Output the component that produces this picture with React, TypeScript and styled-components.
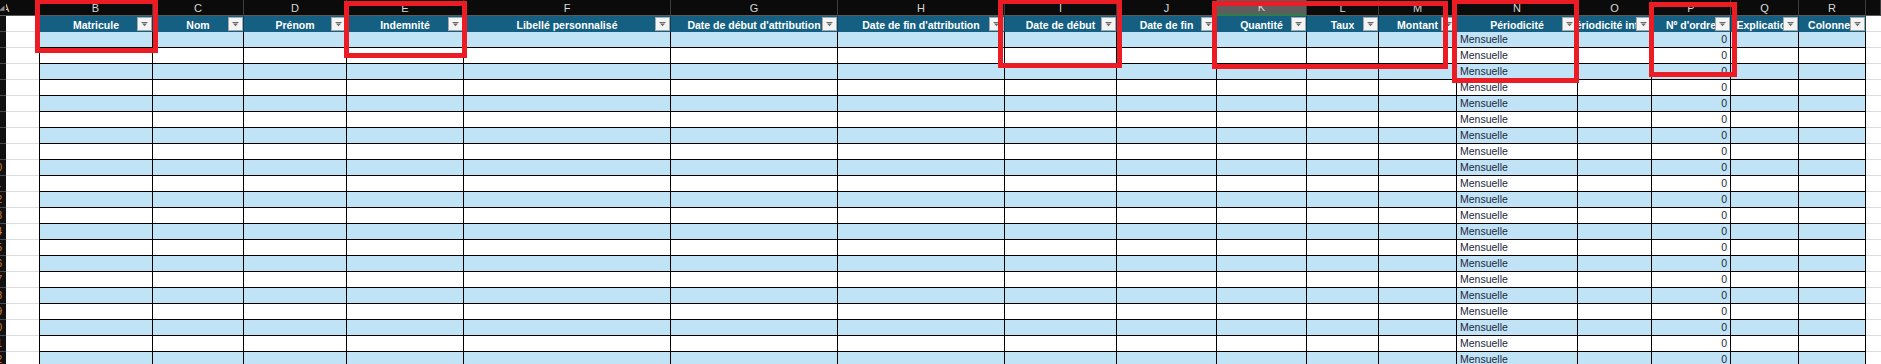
import React from 'react';
import styled, { createGlobalStyle, css } from 'styled-components';

// Excel-like table view: column letters, a filtered table header and banded rows.

const GlobalStyle = createGlobalStyle`
  html, body {
    margin: 0;
    padding: 0;
    background: #ffffff;
    overflow: hidden;
  }
  body {
    font-family: "Liberation Sans", Arial, sans-serif;
  }
`;

interface IColumn {
  letter: string;
  label: string;
  width: number;
  text?: string;
  number?: string;
}

const columns: IColumn[] = [
  { letter: 'B', label: 'Matricule', width: 114 },
  { letter: 'C', label: 'Nom', width: 91 },
  { letter: 'D', label: 'Prénom', width: 103 },
  { letter: 'E', label: 'Indemnité', width: 117 },
  { letter: 'F', label: 'Libellé personnalisé', width: 207 },
  { letter: 'G', label: "Date de début d'attribution", width: 167 },
  { letter: 'H', label: "Date de fin d'attribution", width: 167 },
  { letter: 'I', label: 'Date de début', width: 112 },
  { letter: 'J', label: 'Date de fin', width: 100 },
  { letter: 'K', label: 'Quantité', width: 90 },
  { letter: 'L', label: 'Taux', width: 72 },
  { letter: 'M', label: 'Montant', width: 78 },
  { letter: 'N', label: 'Périodicité', width: 121, text: 'Mensuelle' },
  { letter: 'O', label: 'Périodicité interne', width: 74 },
  { letter: 'P', label: "Nº d'ordre", width: 79, number: '0' },
  { letter: 'Q', label: 'Explication', width: 68 },
  { letter: 'R', label: 'Colonne1', width: 67 },
];

const ROW_COUNT = 21;

// annotation rectangles drawn over the sheet
const marks = [
  { x: 35, y: -1, w: 123, h: 54 },
  { x: 344, y: 1, w: 123, h: 57 },
  { x: 998, y: -1, w: 124, h: 69 },
  { x: 1212, y: 1, w: 236, h: 68 },
  { x: 1452, y: -1, w: 127, h: 84 },
  { x: 1649, y: 2, w: 88, h: 75 },
];

const template = `6px 33px ${columns.map((c) => `${c.width}px`).join(' ')} 1fr`;

const FilterIcon = () => (
  <svg width="7" height="5" viewBox="0 0 7 5">
    <rect x="0.5" y="0" width="6" height="1" fill="#6a6a6a" />
    <polygon points="1,1.5 6,1.5 3.5,4.2" fill="#6a6a6a" />
  </svg>
);

const App = () => {
  const rows = Array.from({ length: ROW_COUNT }, (_, i) => i);

  return (
    <>
      <GlobalStyle />
      <Sheet>
        <LetterRow>
          <Corner>
            <CornerMark>◢</CornerMark>
          </Corner>
          <Letter $clipLeft>A</Letter>
          {columns.map((c) => (
            <Letter key={c.letter} $selected={c.letter === 'K'}>
              {c.letter}
            </Letter>
          ))}
          <Letter />
        </LetterRow>

        <HeaderRow>
          <RowNumber />
          <BlankCell />
          {columns.map((c, i) => (
            <HeaderCell key={c.letter} $first={i === 0}>
              <HeaderLabel>{c.label}</HeaderLabel>
              <FilterButton>
                <FilterIcon />
              </FilterButton>
            </HeaderCell>
          ))}
          <BlankCell />
        </HeaderRow>

        {rows.map((r) => (
          <DataRow key={r}>
            <RowNumber>
              <RowDigits>{r + 2}</RowDigits>
            </RowNumber>
            <BlankCell />
            {columns.map((c, i) => (
              <DataCell
                key={c.letter}
                $band={r % 2 === 0}
                $first={i === 0}
                $align={c.number ? 'right' : 'left'}
              >
                {c.text || c.number || ''}
              </DataCell>
            ))}
            <BlankCell />
          </DataRow>
        ))}

        {marks.map((m, i) => (
          <Mark
            key={i}
            style={{ left: m.x, top: m.y, width: m.w, height: m.h }}
          />
        ))}
      </Sheet>
    </>
  );
};

export default App;

const Sheet = styled.div`
  position: relative;
  width: 1881px;
  height: 364px;
  overflow: hidden;
  background: #ffffff;
`;

const rowGrid = css`
  display: grid;
  grid-template-columns: ${template};
  height: 16px;
`;

const LetterRow = styled.div`
  ${rowGrid};
  background: #0b0b0b;
`;

const Corner = styled.div`
  position: relative;
  background: #0b0b0b;
  border-bottom: 1px solid #5a5a5a;
  overflow: hidden;
`;

const CornerMark = styled.span`
  display: block;
  color: #8a8a8a;
  font-size: 7px;
  line-height: 16px;
  margin-left: -1px;
`;

const Letter = styled.div<{ $selected?: boolean; $clipLeft?: boolean }>`
  display: flex;
  align-items: center;
  justify-content: ${({ $clipLeft }) => ($clipLeft ? 'flex-start' : 'center')};
  box-sizing: border-box;
  overflow: visible;
  font-family: "Liberation Sans", Arial, sans-serif;
  font-size: 11px;
  color: #d8d8d8;
  border-right: 1px solid #3c3c3c;
  border-bottom: 1px solid #5a5a5a;
  background: ${({ $selected }) => ($selected ? '#5e5e5e' : '#0b0b0b')};
  ${({ $selected }) =>
    $selected &&
    css`
      border-bottom: 2px solid #2f7d4a;
    `}
  ${({ $clipLeft }) =>
    $clipLeft &&
    css`
      margin-left: -4px;
      padding-left: 0;
    `}
`;

const HeaderRow = styled.div`
  ${rowGrid};
`;

const DataRow = styled.div`
  ${rowGrid};
`;

const RowNumber = styled.div`
  box-sizing: border-box;
  background: #111111;
  border-bottom: 1px solid #4a4a4a;
  overflow: hidden;
  white-space: nowrap;
`;

const RowDigits = styled.span`
  display: block;
  margin-left: -9px;
  font-size: 10px;
  line-height: 15px;
  color: #d9822b;
`;

const BlankCell = styled.div`
  box-sizing: border-box;
  background: #ffffff;
  border-bottom: 1px solid #dcdcdc;
`;

const HeaderCell = styled.div<{ $first?: boolean }>`
  position: relative;
  display: flex;
  align-items: center;
  justify-content: center;
  box-sizing: border-box;
  overflow: hidden;
  background: #156082;
  border-right: 1px solid #0c3f58;
  ${({ $first }) =>
    $first &&
    css`
      border-left: 1px solid #000000;
    `}
`;

const HeaderLabel = styled.span`
  flex: none;
  white-space: nowrap;
  font-family: "Liberation Sans", Arial, sans-serif;
  font-size: 10.5px;
  font-weight: 700;
  color: #ffffff;
  padding-top: 1px;
`;

const FilterButton = styled.span`
  position: absolute;
  top: 1px;
  right: 0;
  width: 15px;
  height: 14px;
  box-sizing: border-box;
  display: flex;
  align-items: center;
  justify-content: center;
  background: #f4f4f4;
  border: 1px solid #a8a8a8;
`;

const DataCell = styled.div<{
  $band: boolean;
  $first?: boolean;
  $align: 'left' | 'right';
}>`
  display: flex;
  align-items: flex-end;
  justify-content: ${({ $align }) =>
    $align === 'right' ? 'flex-end' : 'flex-start'};
  box-sizing: border-box;
  padding: 0 3px 1px 3px;
  overflow: hidden;
  white-space: nowrap;
  font-family: "Liberation Sans", Arial, sans-serif;
  font-size: 10.5px;
  line-height: 13px;
  color: #221f40;
  background: ${({ $band }) => ($band ? '#c0e4f5' : '#ffffff')};
  border-right: 1px solid #000000;
  border-bottom: 1px solid #000000;
  ${({ $first }) =>
    $first &&
    css`
      border-left: 1px solid #000000;
    `}
`;

const Mark = styled.div`
  position: absolute;
  box-sizing: border-box;
  border: 5px solid #ec1c24;
  pointer-events: none;
`;
